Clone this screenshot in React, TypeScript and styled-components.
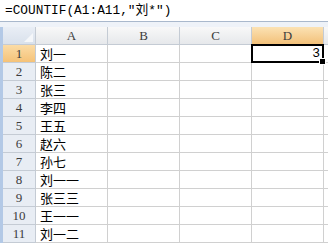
import styled, { createGlobalStyle, css } from 'styled-components';

const GlobalStyle = createGlobalStyle`
  html, body {
    margin: 0;
    padding: 0;
    background: #ffffff;
  }
`;

const names = ['刘一', '陈二', '张三', '李四', '王五', '赵六', '孙七', '刘一一', '张三三', '王一一', '刘一二'];
const columns = ['A', 'B', 'C', 'D'];
const cjk = `"Liberation Mono", "Noto Sans CJK SC", monospace`;

export default function App() {
  return (
    <Sheet>
      <GlobalStyle />
      <FormulaBar>=COUNTIF(A1:A11,"刘*")</FormulaBar>
      <Spacer />
      <Grid>
        <Corner />
        {columns.map((c) => (
          <ColHeader key={c} $active={c === 'D'}>{c}</ColHeader>
        ))}
        <ColHeader $active={false} />
        {names.map((name, i) => (
          <Row key={i} index={i} name={name} />
        ))}
      </Grid>
    </Sheet>
  );
}

function Row({ index, name }: { index: number; name: string }) {
  const first = index === 0;
  return (
    <>
      <RowHeader $active={first}>{index + 1}</RowHeader>
      <Cell>{name}</Cell>
      <Cell />
      <Cell />
      <Cell $selected={first} $right>
        {first ? '3' : ''}
        {first && <FillHandle />}
      </Cell>
      <Cell />
    </>
  );
}

const Sheet = styled.div`
  width: 328px;
  height: 248px;
  overflow: hidden;
  background: #ffffff;
`;

const FormulaBar = styled.div`
  height: 22px;
  box-sizing: border-box;
  padding: 3px 0 0 5px;
  border-bottom: 1px solid #a9b8cc;
  font-family: ${cjk};
  font-size: 12.8px;
  line-height: 16px;
  color: #000;
  white-space: nowrap;
`;

const Spacer = styled.div`
  height: 5px;
  background: #eef2f8;
`;

const Grid = styled.div`
  display: grid;
  grid-template-columns: 33px repeat(4, 72px) 20px;
  grid-auto-rows: 18px;
  border-left: 3px solid #b3c9e6;
`;

const headerBase = css`
  box-sizing: border-box;
  border-right: 1px solid #c4cbd4;
  border-bottom: 1px solid #c4cbd4;
  display: flex;
  align-items: center;
  justify-content: center;
  font-family: "Liberation Serif", "Noto Sans CJK SC", serif;
  font-size: 13px;
  color: #3c3c3c;
`;

const Corner = styled.div`
  ${headerBase};
  position: relative;
  background: linear-gradient(#e9eef5, #d9e1ec);
  &::after {
    content: '';
    position: absolute;
    right: 2px;
    bottom: 2px;
    border-style: solid;
    border-width: 0 0 9px 9px;
    border-color: transparent transparent #f5f7fa transparent;
  }
`;

const ColHeader = styled.div<{ $active: boolean }>`
  ${headerBase};
  background: ${(p) =>
    p.$active ? 'linear-gradient(#fbe2b4, #f3c17a)' : 'linear-gradient(#f8f8f8, #e6e8eb)'};
`;

const RowHeader = styled.div<{ $active: boolean }>`
  ${headerBase};
  background: ${(p) => (p.$active ? 'linear-gradient(#fbdca6, #f5c278)' : '#e8edf4')};
`;

const Cell = styled.div<{ $selected?: boolean; $right?: boolean }>`
  box-sizing: border-box;
  position: relative;
  border-right: 1px solid #d0d0d0;
  border-bottom: 1px solid #d0d0d0;
  padding: 0 3px 0 4px;
  display: flex;
  align-items: center;
  justify-content: ${(p) => (p.$right ? 'flex-end' : 'flex-start')};
  font-family: ${cjk};
  font-size: 13px;
  color: #000;
  white-space: nowrap;
  ${(p) =>
    p.$selected &&
    css`
      &::before {
        content: '';
        position: absolute;
        inset: -1px -1px -1px -1px;
        border: 2px solid #000;
      }
    `}
`;

const FillHandle = styled.span`
  position: absolute;
  right: -3px;
  bottom: -3px;
  width: 5px;
  height: 5px;
  background: #000;
  border: 1px solid #fff;
  z-index: 1;
`;
